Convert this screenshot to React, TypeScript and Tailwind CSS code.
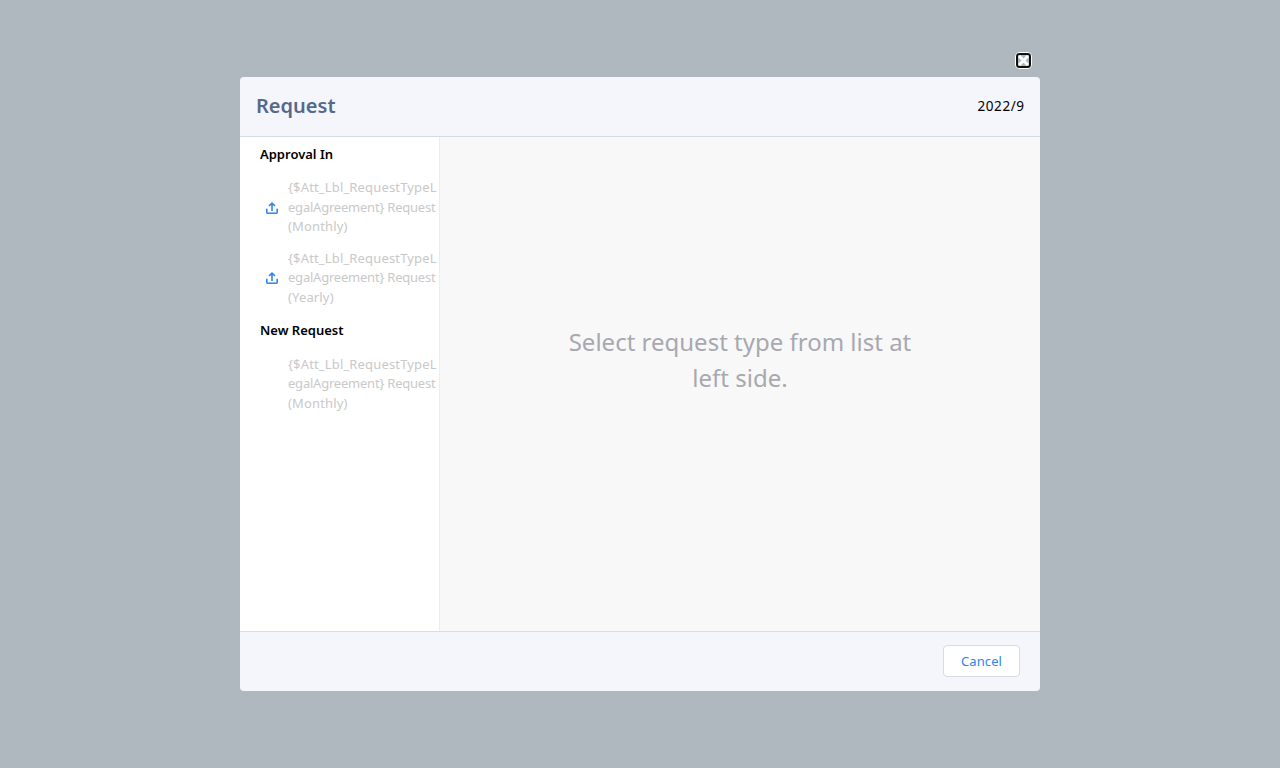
function UploadIcon() {
  return (
    <svg width="12" height="12" viewBox="0 0 12 12" fill="none" stroke="#2d86ee" strokeWidth="1.6" strokeLinejoin="round">
      <path d="M0.8 6.8V10.3Q0.8 11.2 1.7 11.2H10.3Q11.2 11.2 11.2 10.3V6.8" />
      <path d="M6 9V1.2M3 4L6 1.1L9 4" />
    </svg>
  );
}

function SectionTitle({ children }: { children: string }) {
  return <h3 className="py-2 pl-5 text-[13px] leading-[19.5px] font-semibold text-black">{children}</h3>;
}

function RequestItem({ period, pending = false }: { period: string; pending?: boolean }) {
  return (
    <div className="flex items-center py-1.5 pl-[26px]">
      <span className="mr-2.5 w-3 shrink-0 pt-[0.6px]">{pending && <UploadIcon />}</span>
      <p className="text-[13px] leading-[19.5px] whitespace-nowrap text-[#c9c9c9]">
        <span className="block tracking-[0.16px]">{'{$Att_Lbl_RequestTypeL'}</span>
        <span className="block tracking-[-0.22px]">{'egalAgreement} Request'}</span>
        <span className="block tracking-[0.15px]">({period})</span>
      </p>
    </div>
  );
}

export default function App() {
  return (
    <div className="flex h-screen flex-col items-center overflow-hidden bg-[#b0b8bf] pt-[52px] font-['Noto_Sans',sans-serif]">
      <div className="flex h-[25px] w-[800px] justify-end pr-2">
        <button aria-label="Close" className="flex h-[17px] w-[17px] items-center justify-center rounded-[4px] border border-white bg-[#101010]">
          <svg width="11" height="11" viewBox="0 0 11 11">
            <rect width="11" height="11" rx="1" fill="#b0b8bf" />
            <path d="M1 1L10 10M10 1L1 10" stroke="#fff" strokeWidth="3" />
          </svg>
        </button>
      </div>
      <div className="flex h-[614px] w-[800px] flex-col overflow-hidden rounded-[4px] bg-[#f4f6fb]">
        <header className="flex h-[60px] shrink-0 items-center justify-between border-b border-[#d4dbe7] px-4">
          <h2 className="pb-0.5 text-[20px] font-semibold text-[#54698d]">Request</h2>
          <span className="-mr-[0.7px] text-[13.5px] tracking-[0.6px] text-black">2022/9</span>
        </header>
        <div className="flex h-[494px]">
          <aside className="w-[200px] shrink-0 border-r border-[#ededed] bg-white">
            <div className="-mt-[0.5px]">
              <SectionTitle>Approval In</SectionTitle>
              <RequestItem period="Monthly" pending />
              <RequestItem period="Yearly" pending />
              <SectionTitle>New Request</SectionTitle>
              <RequestItem period="Monthly" />
            </div>
          </aside>
          <main className="flex-1 bg-[#f8f8f8] pt-[187px] text-center text-[24px] leading-9 text-[#a8a8b0]">
            <p>Select request type from list at</p>
            <p>left side.</p>
          </main>
        </div>
        <footer className="flex h-[60px] shrink-0 items-start justify-end border-t border-[#d8dde6] pt-[13px] pr-5">
          <button className="h-8 w-[77px] rounded-[4px] border border-[#d9dbdd] bg-white pt-0.5 text-[13px] tracking-[0.1px] text-[#2d86ee]">Cancel</button>
        </footer>
      </div>
    </div>
  );
}
